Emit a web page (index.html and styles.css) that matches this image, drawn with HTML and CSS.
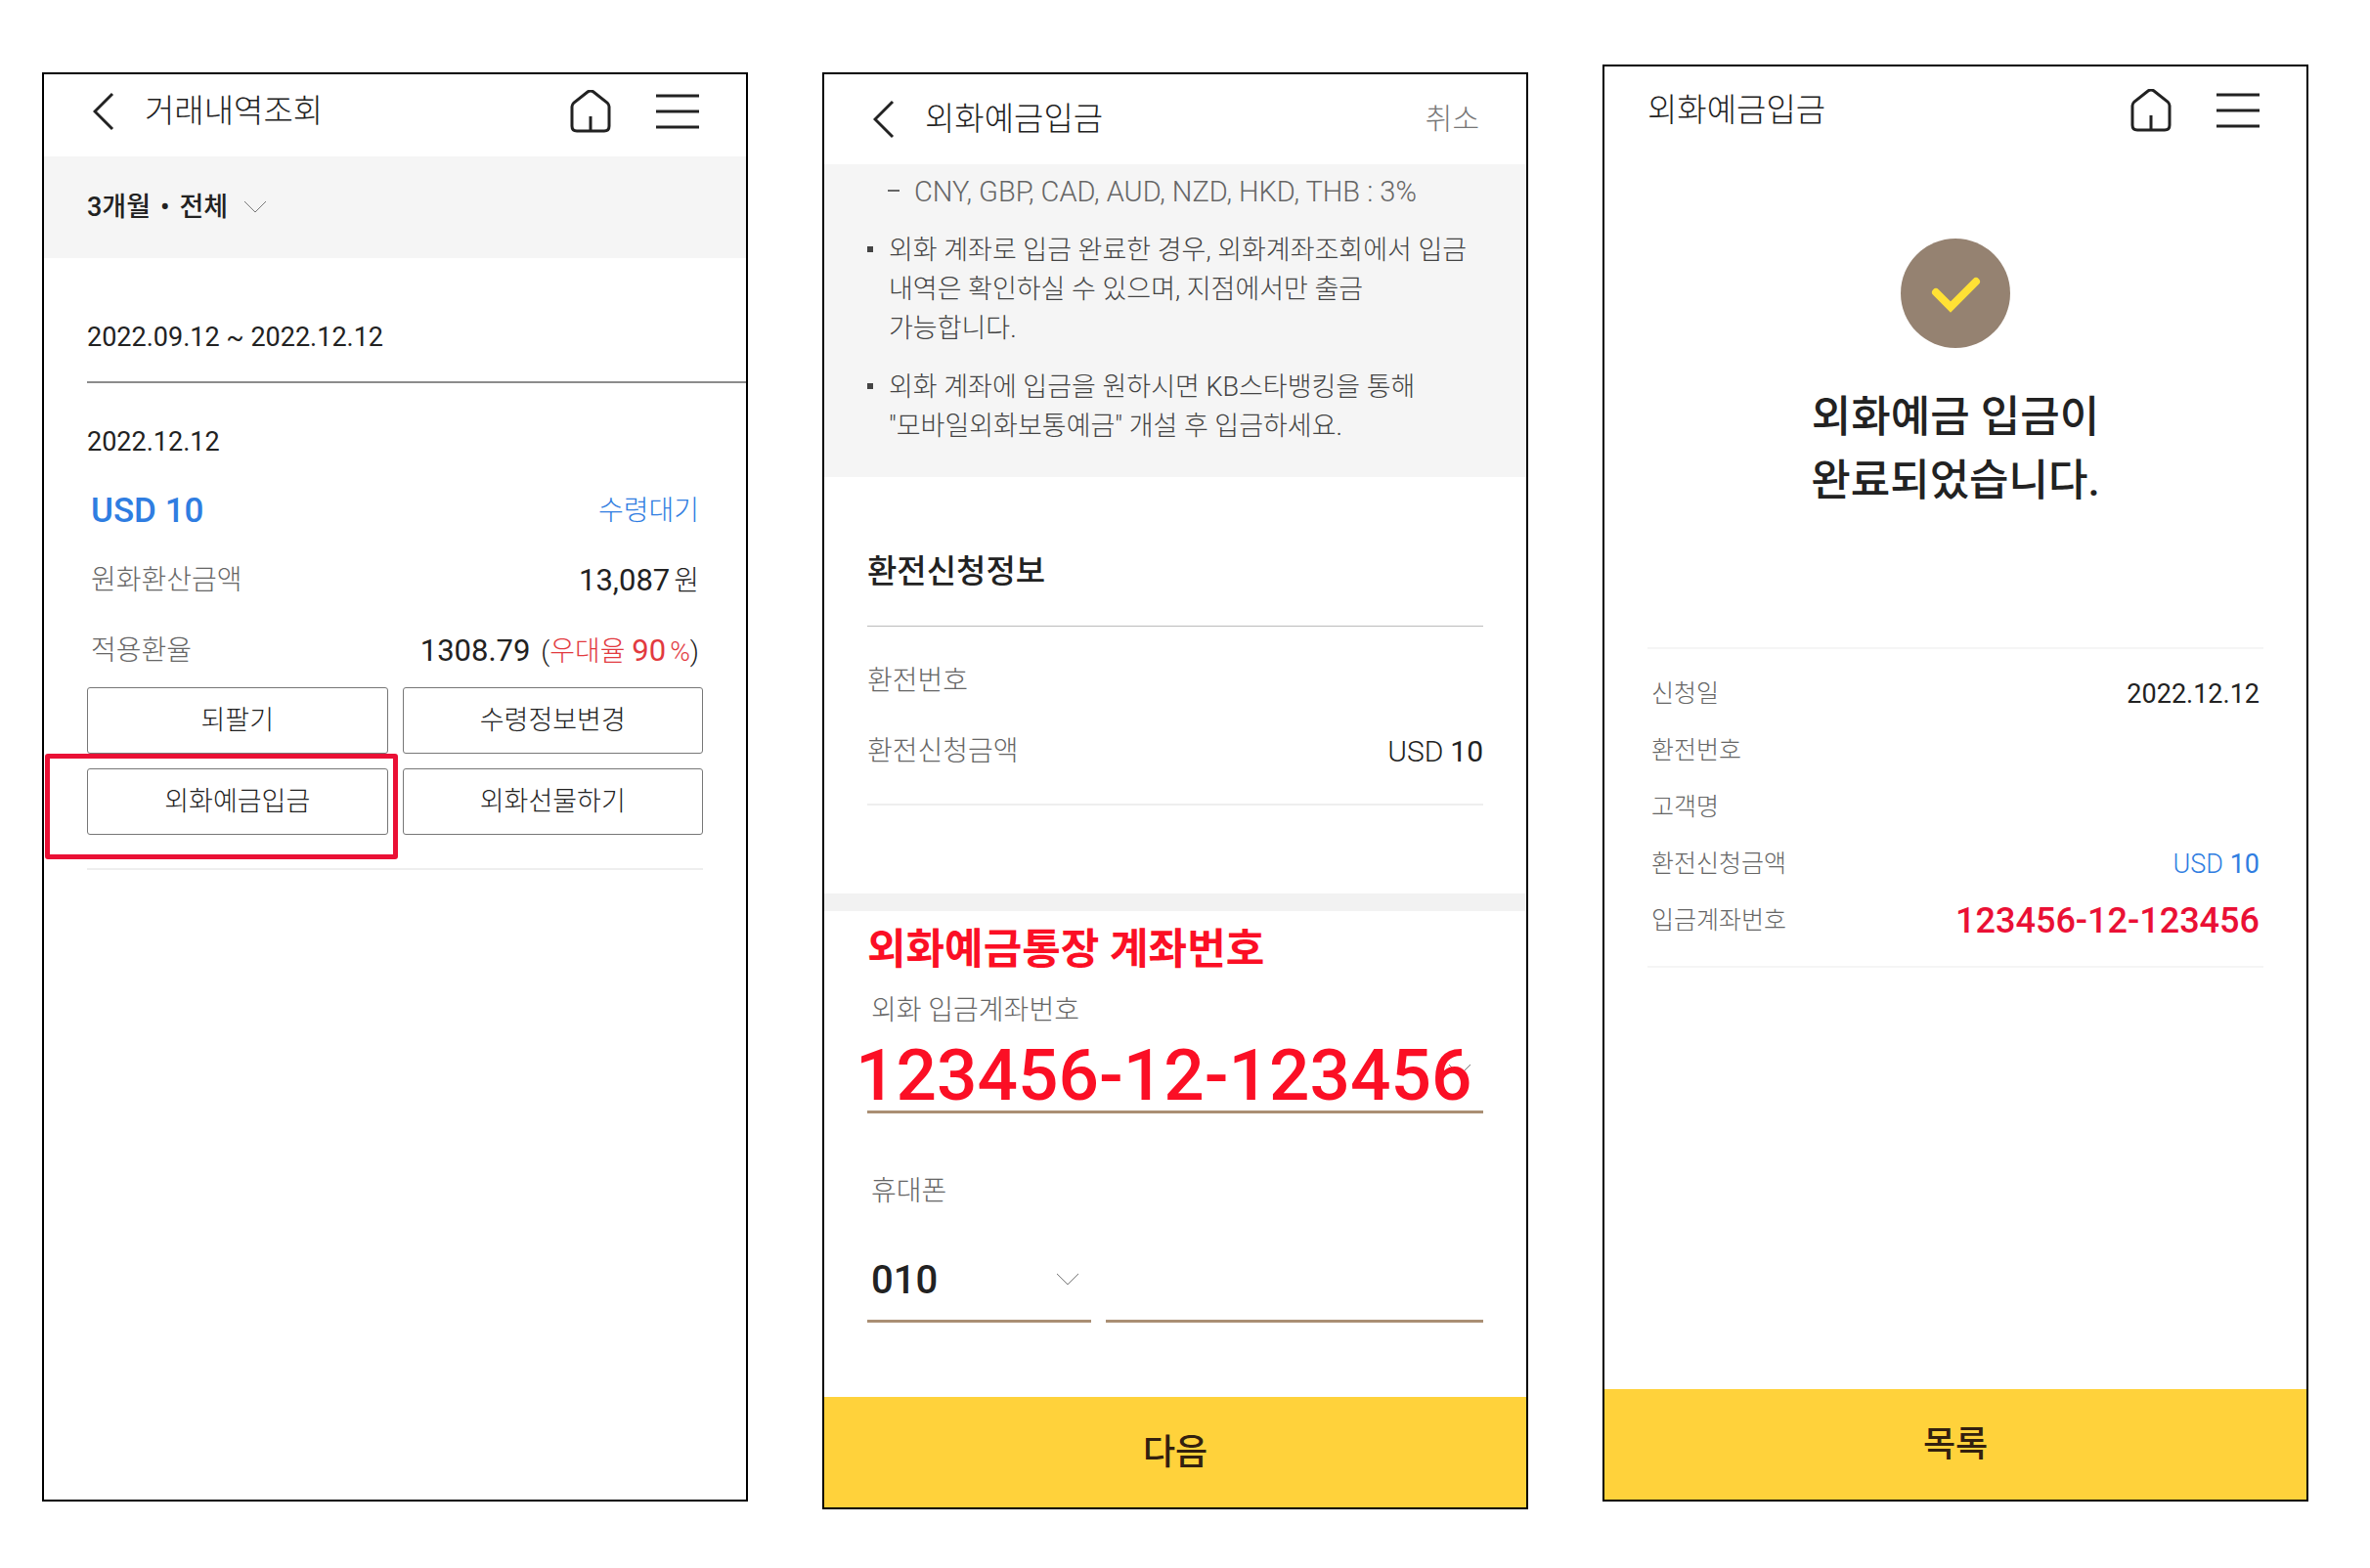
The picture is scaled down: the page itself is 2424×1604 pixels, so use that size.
FILE: index.html
```html
<!DOCTYPE html>
<html lang="ko">
<head>
    <meta charset="UTF-8">
    <meta name="viewport" content="width=device-width, initial-scale=1.0">
    <title>외화예금입금</title>
    <link rel="stylesheet" href="styles.css">
</head>
<body>
    <main class="screens">
        <section class="screen history">
            <header class="topbar">
                <button class="icon-btn back" aria-label="뒤로">
                    <svg width="22" height="40" viewBox="0 0 22 40"><path d="M20 2 L2 20 L20 38"/></svg>
                </button>
                <h1>거래내역조회</h1>
                <button class="icon-btn" aria-label="홈">
                    <svg width="42" height="44" viewBox="0 0 42 44"><path d="M2 17 Q2 15 4 13 L18 2 Q21 0 24 2 L38 13 Q40 15 40 17 V37 Q40 42 35 42 H7 Q2 42 2 37 Z M21 27 V42"/></svg>
                </button>
                <button class="icon-btn menu" aria-label="메뉴">
                    <svg width="44" height="36" viewBox="0 0 44 36"><path d="M0 2 H44 M0 18 H44 M0 34 H44"/></svg>
                </button>
            </header>
            <button class="filter">
                <span>3개월</span><span>•</span><span>전체</span>
                <svg class="chevron" width="24" height="14" viewBox="0 0 24 14"><path d="M1 1 L12 12 L23 1"/></svg>
            </button>
            <p class="period">2022.09.12 ~ 2022.12.12</p>
            <article class="record">
                <p class="date">2022.12.12</p>
                <dl class="rows">
                    <div class="amount"><dt>USD 10</dt><dd>수령대기</dd></div>
                    <div><dt>원화환산금액</dt><dd><span class="num">13,087</span>원</dd></div>
                    <div><dt>적용환율</dt><dd><span class="num">1308.79</span> (<span class="rate">우대율 <span class="num">90</span>%</span>)</dd></div>
                </dl>
                <div class="actions">
                    <button>되팔기</button>
                    <button>수령정보변경</button>
                    <div class="highlight"><button>외화예금입금</button></div>
                    <button>외화선물하기</button>
                </div>
            </article>
        </section>

        <section class="screen deposit">
            <header class="topbar">
                <button class="icon-btn back" aria-label="뒤로">
                    <svg width="22" height="40" viewBox="0 0 22 40"><path d="M20 2 L2 20 L20 38"/></svg>
                </button>
                <h1>외화예금입금</h1>
                <button class="cancel">취소</button>
            </header>
            <ul class="notice">
                <li class="dash">CNY, GBP, CAD, AUD, NZD, HKD, THB : 3%</li>
                <li>외화 계좌로 입금 완료한 경우, 외화계좌조회에서 입금<br>내역은 확인하실 수 있으며, 지점에서만 출금<br>가능합니다.</li>
                <li>외화 계좌에 입금을 원하시면 KB스타뱅킹을 통해<br>"모바일외화보통예금" 개설 후 입금하세요.</li>
            </ul>
            <div class="request">
                <h2>환전신청정보</h2>
                <dl class="rows">
                    <div><dt>환전번호</dt><dd></dd></div>
                    <div><dt>환전신청금액</dt><dd><span class="currency">USD</span> <span class="num">10</span></dd></div>
                </dl>
            </div>
            <form class="form">
                <p class="memo">외화예금통장 계좌번호</p>
                <label for="account">외화 입금계좌번호</label>
                <div class="field account">
                    <select id="account"><option></option></select>
                    <svg class="chevron" width="24" height="14" viewBox="0 0 24 14"><path d="M1 1 L12 12 L23 1"/></svg>
                    <span class="account-memo">123456-12-123456</span>
                </div>
                <label class="phone-label" for="phone-prefix">휴대폰</label>
                <div class="phone">
                    <div class="field prefix">
                        <select id="phone-prefix"><option>010</option></select>
                        <svg class="chevron" width="24" height="14" viewBox="0 0 24 14"><path d="M1 1 L12 12 L23 1"/></svg>
                    </div>
                    <div class="field">
                        <input type="tel" aria-label="휴대폰 번호">
                    </div>
                </div>
            </form>
            <button class="submit">다음</button>
        </section>

        <section class="screen done">
            <header class="topbar">
                <h1>외화예금입금</h1>
                <button class="icon-btn" aria-label="홈">
                    <svg width="42" height="44" viewBox="0 0 42 44"><path d="M2 17 Q2 15 4 13 L18 2 Q21 0 24 2 L38 13 Q40 15 40 17 V37 Q40 42 35 42 H7 Q2 42 2 37 Z M21 27 V42"/></svg>
                </button>
                <button class="icon-btn menu" aria-label="메뉴">
                    <svg width="44" height="36" viewBox="0 0 44 36"><path d="M0 2 H44 M0 18 H44 M0 34 H44"/></svg>
                </button>
            </header>
            <div class="result">
                <svg class="check" width="112" height="112" viewBox="0 0 112 112"><circle cx="56" cy="56" r="56"/><path d="M36 55 L51 70 L77 44"/></svg>
                <h2>외화예금 입금이<br>완료되었습니다.</h2>
            </div>
            <dl class="rows summary">
                <div><dt>신청일</dt><dd>2022.12.12</dd></div>
                <div><dt>환전번호</dt><dd></dd></div>
                <div><dt>고객명</dt><dd></dd></div>
                <div><dt>환전신청금액</dt><dd class="blue"><span class="currency">USD</span> 10</dd></div>
                <div><dt>입금계좌번호</dt><dd class="account-no">123456-12-123456</dd></div>
            </dl>
            <button class="submit">목록</button>
        </section>
    </main>
</body>
</html>
```
FILE: styles.css
```css
* {
    box-sizing: border-box;
    margin: 0;
    padding: 0;
}
body {
    font-family: Roboto, "Noto Sans CJK KR", sans-serif;
    font-size: 28px;
    line-height: 40px;
    font-weight: 300;
    color: #222;
    background-color: #fff;
}
button, input, select {
    font: inherit;
    color: inherit;
    border: none;
    border-radius: 0;
    background: none;
    cursor: pointer;
}
.screens {
    display: grid;
    grid-template-columns: repeat(3, 1fr);
    gap: 76px;
    min-height: 100vh;
    padding: 66px 63px 60px 43px;
}
.screen {
    display: flex;
    flex-direction: column;
    border: 2px solid #000;
}
.history {
    margin: 8px 0;
}
.deposit {
    margin-top: 8px;
}
.done {
    margin-bottom: 8px;
}

/* top bar */
.topbar {
    display: flex;
    align-items: center;
    height: 92px;
    padding: 0 48px 0 50px;
}
.history .topbar {
    height: 84px;
    padding-bottom: 8px;
}
.done .topbar {
    height: 90px;
    padding-left: 44px;
}
.topbar h1 {
    flex: 1;
    font-size: 33px;
    font-weight: 300;
}
.icon-btn {
    display: flex;
}
.icon-btn svg {
    fill: none;
    stroke: #222;
    stroke-width: 3;
}
.back {
    margin-right: 31px;
}
.menu {
    margin-left: 46px;
}
.cancel {
    font-size: 30px;
    color: #777;
}
.chevron {
    fill: none;
    stroke: #777;
    stroke-width: 1;
}

/* history */
.filter {
    display: flex;
    align-items: center;
    gap: 10px;
    height: 104px;
    padding: 0 44px;
    font-size: 27px;
    font-weight: 500;
    background-color: #f5f5f5;
}
.filter .chevron {
    margin-left: 6px;
}
.period {
    margin-left: 44px;
    padding: 61px 0 25px;
    font-size: 27px;
    font-weight: 400;
    border-bottom: 2px solid #8c8c8c;
}
.record {
    margin: 40px 44px 0;
    padding-bottom: 34px;
    border-bottom: 2px solid #eee;
}
.date {
    margin-bottom: 31px;
    font-size: 27px;
    font-weight: 400;
}
.rows {
    display: flex;
    flex-direction: column;
    gap: 31px;
}
.rows div {
    display: flex;
    justify-content: space-between;
}
.rows dt {
    color: #666;
}
.record .rows {
    padding: 0 4px;
}
.num {
    font-size: 30px;
    font-weight: 400;
}
.record .num {
    margin-right: 4px;
    font-size: 31px;
}
.rows .amount dt {
    font-size: 35px;
    font-weight: 500;
    color: #2f7de1;
}
.amount dd {
    color: #2f7de1;
}
.rate {
    color: #e23a3f;
}
.actions {
    display: grid;
    grid-template-columns: 1fr 1fr;
    gap: 15px;
    margin-top: 16px;
}
.actions button {
    width: 100%;
    height: 68px;
    font-size: 27px;
    border: 1px solid #777;
    border-radius: 3px;
}
.highlight {
    position: relative;
}
.highlight::after {
    content: "";
    position: absolute;
    inset: -15px -10px -25px -43px;
    border: 5px solid #ea1035;
    border-radius: 3px;
}

/* deposit */
.notice {
    display: flex;
    flex-direction: column;
    gap: 20px;
    padding: 8px 40px 32px 44px;
    list-style: none;
    font-size: 27px;
    background-color: #f5f5f5;
    color: #444;
}
.notice li {
    position: relative;
    padding-left: 22px;
}
.notice li::before {
    content: "";
    position: absolute;
    left: 0;
    top: 16px;
    width: 6px;
    height: 6px;
    background-color: #444;
}
.notice .dash {
    padding-left: 48px;
    font-size: 29px;
    color: #666;
}
.notice .dash::before {
    left: 21px;
    top: 18px;
    width: 12px;
    height: 2px;
    background-color: #666;
}
.request {
    margin: 0 44px 90px;
    padding: 77px 0 32px;
    border-bottom: 2px solid #eee;
}
.request h2 {
    margin-bottom: 36px;
    padding-bottom: 35px;
    font-size: 33px;
    font-weight: 500;
    border-bottom: 1px solid #bbb;
}
.request .rows {
    gap: 32px;
}
.currency {
    font-weight: 300;
}
.request .currency {
    font-size: 30px;
}
.form {
    padding: 14px 44px 0;
    border-top: 18px solid #f2f2f2;
}
.memo {
    margin-bottom: 18px;
    font-size: 43px;
    font-weight: 700;
    line-height: 50px;
    color: #fb0f25;
}
.form label {
    display: block;
    padding-left: 4px;
    color: #666;
}
.field {
    position: relative;
    flex: 1;
    height: 83px;
    border-bottom: 3px solid #aa8f74;
}
.field select, .field input {
    width: 100%;
    height: 80px;
    padding-left: 4px;
    font-size: 40px;
    font-weight: 500;
    appearance: none;
    outline: none;
}
.field .chevron {
    position: absolute;
    right: 12px;
    top: 32px;
}
.account {
    margin-top: 2px;
}
.account-memo {
    position: absolute;
    left: -12px;
    top: 4px;
    font-size: 73px;
    font-weight: 500;
    line-height: 80px;
    color: #fb0f25;
    pointer-events: none;
}
.form .phone-label {
    margin: 60px 0 31px;
}
.phone {
    display: flex;
    gap: 15px;
}
.phone .prefix {
    flex: 0 0 229px;
}
.submit {
    height: 113px;
    margin-top: auto;
    font-size: 36px;
    font-weight: 500;
    color: #33200f;
    background-color: #ffd23b;
}

/* done */
.result {
    padding: 86px 0 137px;
    text-align: center;
}
.check {
    display: block;
    margin: 0 auto 39px;
}
.check circle {
    fill: #958271;
}
.check path {
    fill: none;
    stroke: #ffe135;
    stroke-width: 8;
    stroke-linecap: round;
}
.result h2 {
    font-size: 44px;
    font-weight: 500;
    line-height: 65px;
}
.summary {
    gap: 18px;
    margin: 0 44px;
    padding: 26px 4px;
    font-size: 27px;
    font-weight: 400;
    border: solid #f5f5f5;
    border-width: 2px 0;
}
.summary dt {
    font-size: 25px;
    font-weight: 300;
}
.summary .blue {
    color: #2f7de1;
}
.summary .account-no {
    font-size: 36px;
    font-weight: 500;
    color: #ea1035;
}
```
